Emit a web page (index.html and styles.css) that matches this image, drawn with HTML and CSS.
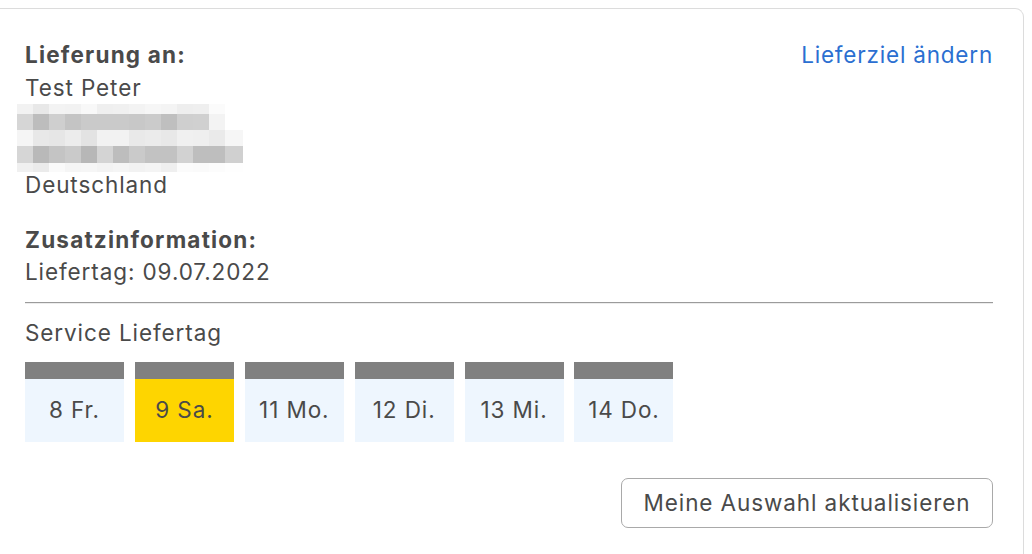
FILE: index.html
```html
<!DOCTYPE html>
<html lang="de">
<head>
<meta charset="utf-8">
<link rel="stylesheet" href="styles.css">
</head>
<body>
<div class="card">
  <div class="head">
    <div class="address">
      <div class="label">Lieferung an:</div>
      <div>Test Peter</div>
      <svg class="blur" width="226" height="68" viewBox="0 0 226 68" preserveAspectRatio="none">
        <g>
          <rect x="0" y="0" width="16" height="10" fill="#f2f2f2"/><rect x="16" y="0" width="16" height="10" fill="#e8e8e8"/><rect x="32" y="0" width="16" height="10" fill="#f3f3f3"/><rect x="48" y="0" width="16" height="10" fill="#f2f2f2"/><rect x="64" y="0" width="16" height="10" fill="#f8f8f8"/><rect x="80" y="0" width="16" height="10" fill="#efefef"/><rect x="96" y="0" width="16" height="10" fill="#f0f0f0"/><rect x="112" y="0" width="16" height="10" fill="#f3f3f3"/><rect x="128" y="0" width="16" height="10" fill="#f6f6f6"/><rect x="144" y="0" width="16" height="10" fill="#f4f4f4"/><rect x="160" y="0" width="16" height="10" fill="#eeeeee"/><rect x="176" y="0" width="16" height="10" fill="#efefef"/><rect x="192" y="0" width="16" height="10" fill="#fbfbfb"/>
          <rect x="0" y="10" width="16" height="16" fill="#d6d6d6"/><rect x="16" y="10" width="16" height="16" fill="#bdbdbd"/><rect x="32" y="10" width="16" height="16" fill="#cfcfcf"/><rect x="48" y="10" width="16" height="16" fill="#c4c4c4"/><rect x="64" y="10" width="16" height="16" fill="#cacaca"/><rect x="80" y="10" width="16" height="16" fill="#cacaca"/><rect x="96" y="10" width="16" height="16" fill="#cacaca"/><rect x="112" y="10" width="16" height="16" fill="#c8c8c8"/><rect x="128" y="10" width="16" height="16" fill="#cbcbcb"/><rect x="144" y="10" width="16" height="16" fill="#bfbfbf"/><rect x="160" y="10" width="16" height="16" fill="#cfcfcf"/><rect x="176" y="10" width="16" height="16" fill="#d0d0d0"/><rect x="192" y="10" width="16" height="16" fill="#f3f3f3"/>
          <rect x="0" y="26" width="16" height="16" fill="#f5f5f5"/><rect x="16" y="26" width="16" height="16" fill="#e8e8e8"/><rect x="32" y="26" width="16" height="16" fill="#e6e6e6"/><rect x="48" y="26" width="16" height="16" fill="#ececec"/><rect x="64" y="26" width="16" height="16" fill="#e3e3e3"/><rect x="80" y="26" width="16" height="16" fill="#f2f2f2"/><rect x="96" y="26" width="16" height="16" fill="#f2f2f2"/><rect x="112" y="26" width="16" height="16" fill="#e9e9e9"/><rect x="128" y="26" width="16" height="16" fill="#ebebeb"/><rect x="144" y="26" width="16" height="16" fill="#e8e8e8"/><rect x="160" y="26" width="16" height="16" fill="#f0f0f0"/><rect x="176" y="26" width="16" height="16" fill="#efefef"/><rect x="192" y="26" width="16" height="16" fill="#eaeaea"/><rect x="208" y="26" width="18" height="16" fill="#f6f6f6"/>
          <rect x="0" y="42" width="16" height="17" fill="#d6d6d6"/><rect x="16" y="42" width="16" height="17" fill="#b9b9b9"/><rect x="32" y="42" width="16" height="17" fill="#c4c4c4"/><rect x="48" y="42" width="16" height="17" fill="#cacaca"/><rect x="64" y="42" width="16" height="17" fill="#b7b7b7"/><rect x="80" y="42" width="16" height="17" fill="#d4d4d4"/><rect x="96" y="42" width="16" height="17" fill="#bdbdbd"/><rect x="112" y="42" width="16" height="17" fill="#cacaca"/><rect x="128" y="42" width="16" height="17" fill="#c2c2c2"/><rect x="144" y="42" width="16" height="17" fill="#c2c2c2"/><rect x="160" y="42" width="16" height="17" fill="#d2d2d2"/><rect x="176" y="42" width="16" height="17" fill="#bebebe"/><rect x="192" y="42" width="16" height="17" fill="#bebebe"/><rect x="208" y="42" width="18" height="17" fill="#d0d0d0"/>
          <rect x="0" y="59" width="16" height="9" fill="#f0f0f0"/><rect x="16" y="59" width="16" height="9" fill="#ebebeb"/><rect x="32" y="59" width="16" height="9" fill="#fafafa"/><rect x="48" y="59" width="16" height="9" fill="#f5f5f5"/><rect x="64" y="59" width="16" height="9" fill="#f6f6f6"/><rect x="80" y="59" width="16" height="9" fill="#f3f3f3"/><rect x="96" y="59" width="16" height="9" fill="#f5f5f5"/><rect x="112" y="59" width="16" height="9" fill="#f2f2f2"/><rect x="128" y="59" width="16" height="9" fill="#f4f4f4"/><rect x="144" y="59" width="16" height="9" fill="#efefef"/><rect x="160" y="59" width="16" height="9" fill="#fbfbfb"/><rect x="176" y="59" width="16" height="9" fill="#fafafa"/><rect x="192" y="59" width="16" height="9" fill="#fcfcfc"/><rect x="208" y="59" width="18" height="9" fill="#fefefe"/>
        </g>
      </svg>
      <div>Deutschland</div>
    </div>
    <a class="change" href="#">Lieferziel ändern</a>
  </div>
  <div class="extra">
    <div class="label">Zusatzinformation:</div>
    <div>Liefertag: 09.07.2022</div>
  </div>
  <hr class="sep">
  <div class="service">Service Liefertag</div>
  <div class="days">
    <div class="day"><div class="day-top"></div><div class="day-body">8 Fr.</div></div>
    <div class="day selected"><div class="day-top"></div><div class="day-body">9 Sa.</div></div>
    <div class="day"><div class="day-top"></div><div class="day-body">11 Mo.</div></div>
    <div class="day"><div class="day-top"></div><div class="day-body">12 Di.</div></div>
    <div class="day"><div class="day-top"></div><div class="day-body">13 Mi.</div></div>
    <div class="day"><div class="day-top"></div><div class="day-body">14 Do.</div></div>
  </div>
  <div class="actions">
    <button class="update" type="button">Meine Auswahl aktualisieren</button>
  </div>
</div>
</body>
</html>
```
FILE: styles.css
```css
html, body {
  margin: 0;
  padding: 0;
  background: #ffffff;
}
body {
  font-family: Inter, "Noto Sans", "Liberation Sans", sans-serif;
  font-size: 22.5px;
  line-height: 32.7px;
  letter-spacing: 0.9px;
  color: #4a4a4a;
  overflow: hidden;
}
.card {
  margin: 8px 8px 0 -1px;
  border: 1px solid #dcdcdc;
  border-bottom: none;
  border-radius: 0 9px 0 0;
  padding: 30px 30px 40px 25px;
}
.head {
  display: flex;
  justify-content: space-between;
  align-items: flex-start;
}
.label {
  font-weight: 700;
  letter-spacing: 1.2px;
}
.blur {
  display: block;
  margin: 0 0 -3px -8px;
  width: 226px;
  height: 68px;
}
.change {
  color: #2b6fd1;
  text-decoration: none;
  letter-spacing: 0.8px;
}
.extra {
  margin-top: 21.5px;
}
.sep {
  margin: 13px 0 13px 0;
  border: none;
  border-top: 1px solid #9b9b9b;
  border-bottom: 1px solid #ececec;
  height: 0;
}
.service {
  margin-bottom: 12.6px;
}
.days {
  display: flex;
  gap: 10.9px;
}
.day {
  width: 99px;
}
.day-top {
  height: 17px;
  background: #808080;
}
.day-body {
  height: 63px;
  background: #eef6fe;
  display: flex;
  align-items: center;
  justify-content: center;
}
.day.selected .day-body {
  background: #fed500;
}
.actions {
  display: flex;
  justify-content: flex-end;
  margin-top: 36px;
}
.update {
  font: inherit;
  letter-spacing: 0.9px;
  color: #4a4a4a;
  background: #ffffff;
  border: 1px solid #a9a9a9;
  border-radius: 7px;
  width: 372px;
  height: 50px;
  padding: 0;
}
```
